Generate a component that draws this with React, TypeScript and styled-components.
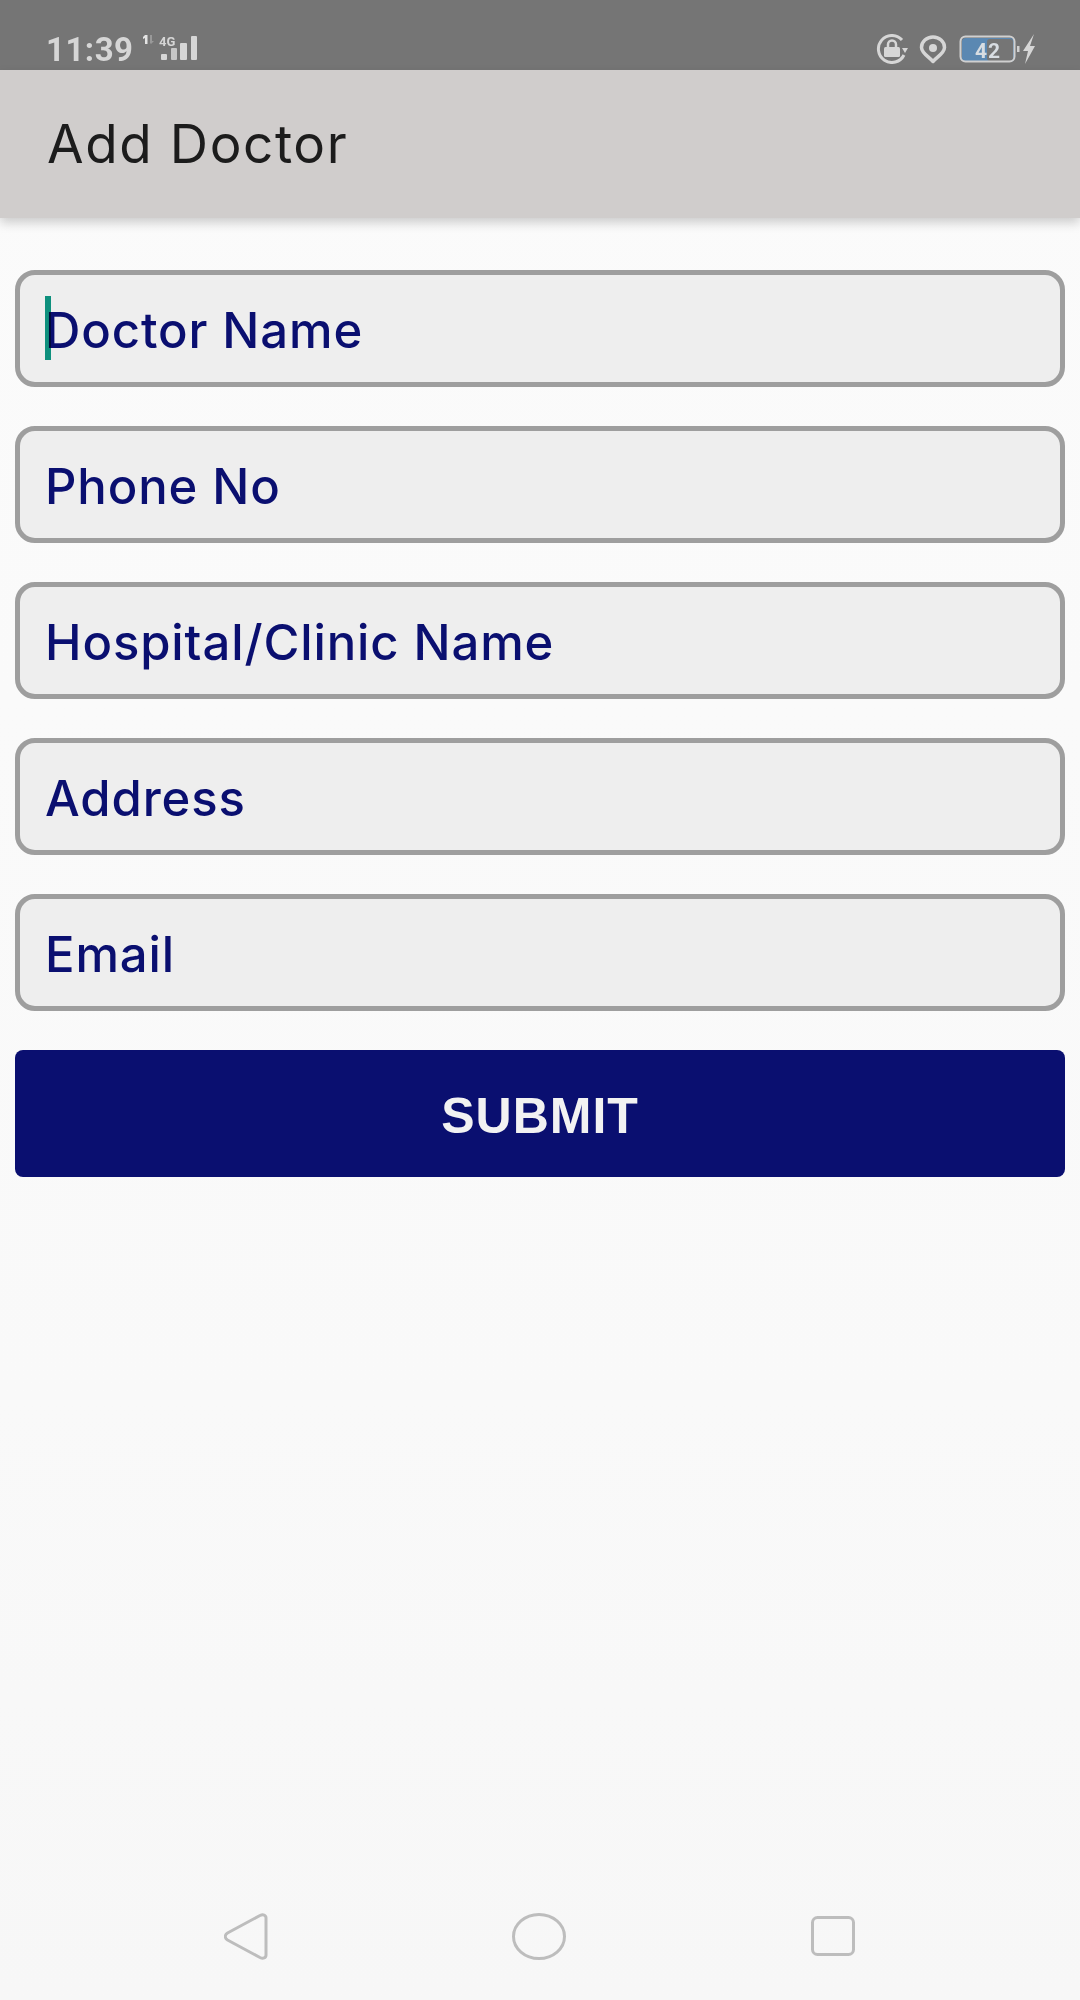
import React from "react";
import styled, { createGlobalStyle } from "styled-components";

const Global = createGlobalStyle`
  html, body { margin: 0; padding: 0; }
  body { font-family: Inter, "Liberation Sans", sans-serif; }
`;

const Page = styled.div`
  width: 1080px;
  height: 2000px;
  display: flex;
  flex-direction: column;
  background: linear-gradient(#fbfbfb, #f9f9f9 70%, #f7f7f7);
  overflow: hidden;
  filter: blur(0.4px);
`;

const StatusBar = styled.header`
  height: 70px;
  flex: none;
  box-sizing: border-box;
  background: #757575;
  padding: 0 45px 0 46px;
  display: flex;
  align-items: flex-start;
  justify-content: space-between;
  color: #d6d6d6;
`;

const StatusGroup = styled.div`
  display: flex;
  align-items: center;
  height: 70px;
  padding-top: 28px;
  box-sizing: border-box;
`;

const Time = styled.span`
  font-family: Roboto, sans-serif;
  font-size: 33px;
  font-weight: 700;
  letter-spacing: 0.5px;
  line-height: 40px;
  margin-right: 8px;
  padding-top: 1px;
`;

const AppBar = styled.div`
  height: 148px;
  flex: none;
  box-sizing: border-box;
  background: #d0cdcc;
  padding: 0 46px 0 47px;
  display: flex;
  align-items: center;
  font-size: 53px;
  letter-spacing: 1.6px;
  color: #1c1c1c;
  box-shadow: 0 5px 10px rgba(0, 0, 0, 0.18);
  position: relative;
`;

const Form = styled.main`
  flex: 1;
  padding: 52px 15px 0;
  display: flex;
  flex-direction: column;
  gap: 39px;
`;

const Field = styled.div`
  height: 117px;
  box-sizing: border-box;
  border: 5px solid #9e9e9e;
  border-radius: 20px;
  background: #eeeeee;
  padding: 3px 0 0 25px;
  display: flex;
  align-items: center;
  font-size: 49px;
  font-weight: 450;
  letter-spacing: 0.9px;
  color: #0a0f70;
  position: relative;
`;

const Caret = styled.span`
  position: absolute;
  left: 25px;
  top: 21px;
  width: 6px;
  height: 64px;
  background: #0f9a86;
  mix-blend-mode: multiply;
`;

const Submit = styled.button`
  height: 127px;
  border: 0;
  border-radius: 8px;
  background: #0a0f70;
  color: #f2f2f2;
  font-family: "Liberation Sans", sans-serif;
  font-size: 50px;
  font-weight: 700;
  letter-spacing: 1px;
  padding: 4px 0 0;
`;

const NavBar = styled.nav`
  height: 48px;
  margin-bottom: 40px;
  flex: none;
  display: grid;
  grid-template-columns: 1fr 1fr 1fr;
  padding: 0 225px 0 224px;
  align-items: center;
  color: #bdbdbd;
`;

const NavCell = styled.div<{ $align: string }>`
  display: flex;
  justify-content: ${(p) => p.$align};
`;

const LockIcon = () => (
  <svg width="34" height="30" viewBox="0 0 34 30" style={{ marginRight: 10 }} fill="none">
    <path d="M27 6A13.500 13.500 0 1 0 29 21" stroke="#d6d6d6" strokeWidth="3" />
    <path d="M27 14h6l-3 5z" fill="#d6d6d6" />
    <rect x="9" y="13" width="16" height="10" rx="1.5" fill="#d6d6d6" />
    <path d="M13 13V10.500a4 4 0 0 1 8 0V13" stroke="#d6d6d6" strokeWidth="2.500" />
  </svg>
);

const PinIcon = () => (
  <svg width="28" height="29" viewBox="0 0 28 29" style={{ marginRight: 12 }} fill="none">
    <path d="M14 26.500C10 22 2.500 18 2.500 12.500A11.500 10.500 0 0 1 25.500 12.500C25.500 18 18 22 14 26.500Z" stroke="#d6d6d6" strokeWidth="3.500" strokeLinejoin="round" />
    <circle cx="14" cy="13" r="4" fill="#d6d6d6" />
  </svg>
);

const SignalIcon = () => (
  <svg width="56" height="30" viewBox="0 0 56 30" fill="#d6d6d6">
    <path d="M3 1h2.500v9H3V4L1 5V3z" fill="#e4e4e4" />
    <path d="M8 1h2v6h2l-3 3-1-1z" fill="#999" />
    <text x="17" y="12" fontFamily="Roboto" fontSize="13" fontWeight="700">4G</text>
    <rect x="19" y="20" width="6" height="6" rx="1" />
    <rect x="29" y="14" width="6" height="12" rx="1" opacity=".85" />
    <rect x="38" y="9" width="7" height="17" rx="1" />
    <rect x="49" y="2" width="6" height="24" rx="1" />
  </svg>
);

const BatteryIcon = () => (
  <svg width="76" height="32" viewBox="0 0 76 32" fill="none">
    <rect x="3" y="5" width="52" height="24" rx="4" fill="#5b88b2" />
    <rect x="28" y="6" width="26" height="22" rx="3" fill="#757575" />
    <rect x="1.500" y="3.500" width="54" height="25" rx="5" stroke="#d0d0d0" strokeWidth="2" />
    <text x="29" y="24.500" textAnchor="middle" fontFamily="Roboto" fontSize="21" fontWeight="700" letterSpacing="1" fill="#d8dde2">42</text>
    <rect x="58" y="13" width="2.500" height="6" fill="#d0d0d0" />
    <path d="M75 1L64 18h5l-3 13 10-18h-5z" fill="#d6d6d6" />
  </svg>
);

const BackIcon = () => (
  <svg width="44" height="47" viewBox="0 0 44 47" fill="none" stroke="currentColor" strokeWidth="3">
    <path d="M3.500 20L36 2.500c3-1.500 6-.5 6 2.500v37c0 3-3 4-6 2.500L3.500 27c-3-2-3-5 0-7z" strokeLinejoin="round" />
  </svg>
);

const HomeIcon = () => (
  <svg width="54" height="47" viewBox="0 0 54 47">
    <ellipse cx="27" cy="23.500" rx="25.500" ry="22" fill="none" stroke="currentColor" strokeWidth="3" />
  </svg>
);

const RecentIcon = () => (
  <svg width="44" height="40" viewBox="0 0 44 40">
    <rect x="1.500" y="1.500" width="41" height="37" rx="5" fill="none" stroke="currentColor" strokeWidth="3" />
  </svg>
);

const fields = ["Doctor Name", "Phone No", "Hospital/Clinic Name", "Address", "Email"];

export default function App() {
  return (
    <>
      <Global />
      <Page>
        <StatusBar>
          <StatusGroup>
            <Time>11:39</Time>
            <SignalIcon />
          </StatusGroup>
          <StatusGroup>
            <LockIcon />
            <PinIcon />
            <BatteryIcon />
          </StatusGroup>
        </StatusBar>
        <AppBar>Add Doctor</AppBar>
        <Form>
          {fields.map((f, i) => (
            <Field key={f}>
              {i === 0 && <Caret />}
              {f}
            </Field>
          ))}
          <Submit>SUBMIT</Submit>
        </Form>
        <NavBar>
          <NavCell $align="flex-start"><BackIcon /></NavCell>
          <NavCell $align="center"><HomeIcon /></NavCell>
          <NavCell $align="flex-end"><RecentIcon /></NavCell>
        </NavBar>
      </Page>
    </>
  );
}
